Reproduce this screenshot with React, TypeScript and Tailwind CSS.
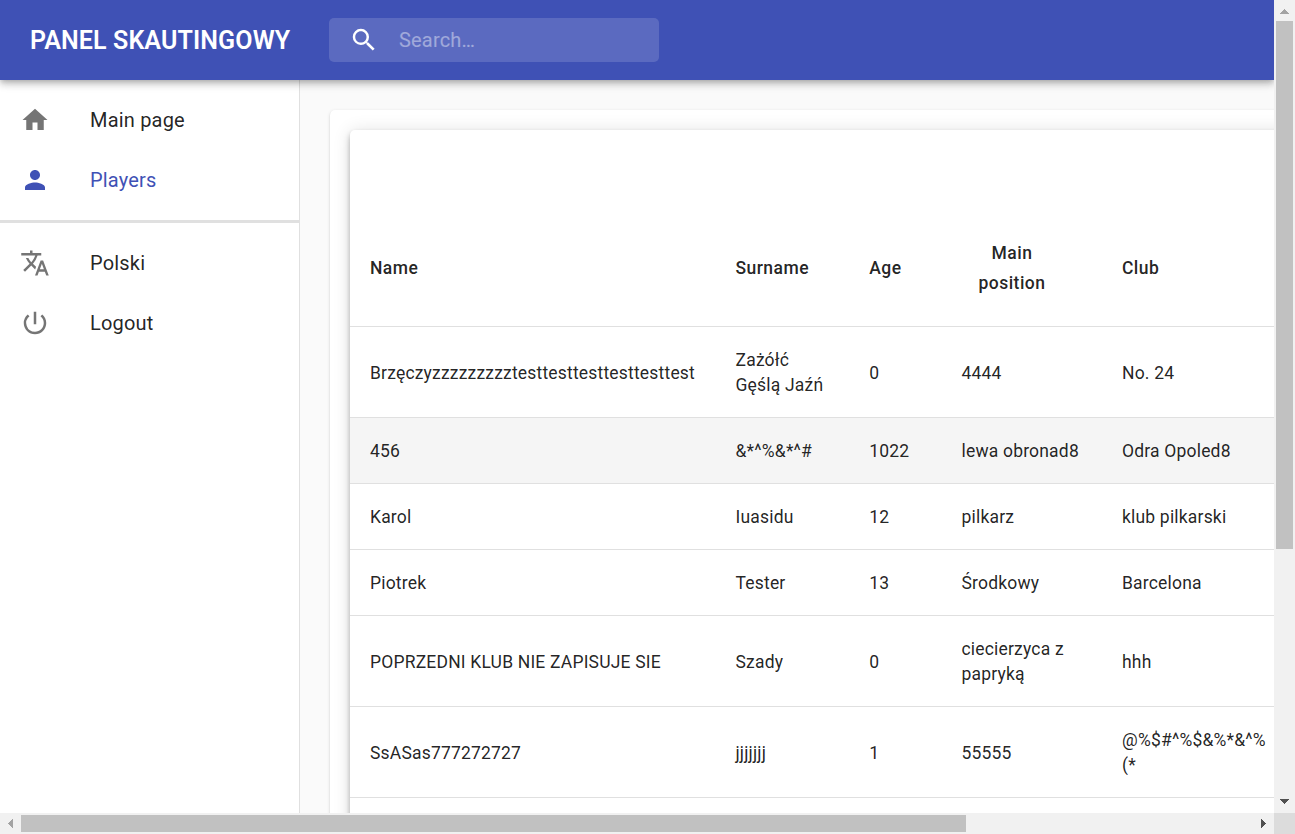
import type { ReactNode } from 'react';
import { MdHome, MdPerson, MdPowerSettingsNew, MdSearch, MdTranslate } from 'react-icons/md';

const players = [
  ['Brzęczyzzzzzzzzztesttesttesttesttesttest', 'Zażółć Gęślą Jaźń', '0', '4444', 'No. 24'],
  ['456', '&*^%&*^#', '1022', 'lewa obronad8', 'Odra Opoled8'],
  ['Karol', 'Iuasidu', '12', 'pilkarz', 'klub pilkarski'],
  ['Piotrek', 'Tester', '13', 'Środkowy', 'Barcelona'],
  ['POPRZEDNI KLUB NIE ZAPISUJE SIE', 'Szady', '0', 'ciecierzyca z papryką', 'hhh'],
  ['SsASas777272727', 'jjjjjjj', '1', '55555', '@%$#^%$&%*&^% (*'],
];

const rowHeights = ['h-[91px]', 'h-[66px]', 'h-[66px]', 'h-[66px]', 'h-[91px]', 'h-[91px]'];
const columns = 'grid grid-cols-[365.5px_133.8px_92.2px_160.5px_200px]';

function NavItem({ icon, label, active = false }: { icon: ReactNode; label: string; active?: boolean }) {
  return (
    <a className={`flex h-[60px] items-center pl-5 ${active ? 'text-[#3f51b5]' : 'text-black/[0.87]'}`}>
      <span className={`w-[70px] text-[30px] ${active ? 'text-[#3f51b5]' : 'text-[#757575]'}`}>{icon}</span>
      <span className="text-[20px] leading-[30px] tracking-[0.00938em]">{label}</span>
    </a>
  );
}

function Header() {
  return (
    <header className="relative z-10 flex h-20 shrink-0 items-center bg-[#3f51b5] pl-[30px] text-white shadow-[0_2.5px_5px_-1.25px_rgba(0,0,0,0.2),0_5px_6.25px_0_rgba(0,0,0,0.14),0_1.25px_12.5px_0_rgba(0,0,0,0.12)]">
      <h1 className="w-[299px] pt-0.5 whitespace-nowrap text-[25px] leading-10 font-semibold tracking-[0.12px]">PANEL SKAUTINGOWY</h1>
      <div className="flex h-11 w-[330px] items-center rounded-[5px] bg-white/15 pl-5">
        <MdSearch className="text-[30px]" />
        <input
          placeholder="Search…"
          className="ml-5 w-[240px] bg-transparent text-[20px] tracking-[0.00938em] outline-none placeholder:text-white/[0.42]"
        />
      </div>
    </header>
  );
}

function Sidebar() {
  return (
    <nav className="w-[300px] shrink-0 border-r border-[#e0e0e0] bg-white pt-2.5">
      <NavItem icon={<MdHome />} label="Main page" />
      <NavItem icon={<MdPerson />} label="Players" active />
      <hr className="my-2.5 h-[3px] border-0 bg-[#e0e0e0]" />
      <NavItem icon={<MdTranslate />} label="Polski" />
      <NavItem icon={<MdPowerSettingsNew />} label="Logout" />
    </nav>
  );
}

function PlayersTable() {
  return (
    <div className="h-[900px] w-[1300px] rounded-[5px] bg-white pt-20 text-[17.5px] text-black/[0.87] shadow-[0_2.5px_5px_-1.25px_rgba(0,0,0,0.2),0_5px_7px_0_rgba(0,0,0,0.16),0_1.25px_18px_0_rgba(0,0,0,0.12)]">
      <div className={`${columns} h-[117px] items-center border-b border-[#e0e0e0] leading-[30px] font-medium tracking-[0.45px]`}>
        <div className="pl-5">Name</div>
        <div className="pl-5">Surname</div>
        <div className="pl-5">Age</div>
        <div className="w-[141px] px-9 text-center">Main position</div>
        <div className="pl-5">Club</div>
      </div>
      {players.map((row, i) => (
        <div
          key={row[0]}
          className={`${columns} ${rowHeights[i]} items-center border-b border-[#e0e0e0] pt-0.5 leading-[25px] tracking-[0.01071em] ${i === 1 ? 'bg-[#f5f5f5]' : ''}`}
        >
          {row.map((value, j) => (
            <div key={j} className={j === 4 ? 'w-[175px] pl-5' : 'px-5'}>{value}</div>
          ))}
        </div>
      ))}
    </div>
  );
}

function VerticalScrollbar() {
  return (
    <div className="flex w-[21px] flex-col items-center bg-[#f1f1f1]">
      <svg className="h-[21px] w-[21px] shrink-0" viewBox="0 0 21 21" shapeRendering="crispEdges"><path d="M6 14h9l-4.500-5z" fill="#a3a3a3" /></svg>
      <div className="h-[528px] w-[17px] bg-[#c1c1c1]" />
      <svg className="mt-auto h-[21px] w-[21px] shrink-0" viewBox="0 0 21 21" shapeRendering="crispEdges"><path d="M6 7h9l-4.500 5z" fill="#505050" /></svg>
    </div>
  );
}

function HorizontalScrollbar() {
  return (
    <div className="flex items-center bg-[#f1f1f1]">
      <svg className="h-[21px] w-[21px] shrink-0" viewBox="0 0 21 21" shapeRendering="crispEdges"><path d="M13 6v9l-5-4.500z" fill="#a3a3a3" /></svg>
      <div className="h-[17px] w-[945px] bg-[#c1c1c1]" />
      <svg className="ml-auto h-[21px] w-[21px] shrink-0" viewBox="0 0 21 21" shapeRendering="crispEdges"><path d="M8 6v9l5-4.500z" fill="#505050" /></svg>
    </div>
  );
}

export default function App() {
  return (
    <div className="grid h-[834px] w-[1295px] grid-cols-[1274px_21px] grid-rows-[813px_21px] overflow-hidden font-['Roboto',sans-serif]">
      <div className="flex min-h-0 min-w-0 flex-col overflow-hidden bg-[#fafafa]">
        <Header />
        <div className="flex min-h-0 flex-1">
          <Sidebar />
          <main className="min-w-0 flex-1 overflow-hidden pt-[30px] pl-[30px]">
            <div className="h-[1000px] w-[1340px] rounded-[5px] bg-white p-5 shadow-[0_2.5px_1.25px_-1.25px_rgba(0,0,0,0.2),0_1.25px_1.25px_0_rgba(0,0,0,0.14),0_1.25px_3.75px_0_rgba(0,0,0,0.12)]">
              <PlayersTable />
            </div>
          </main>
        </div>
      </div>
      <VerticalScrollbar />
      <HorizontalScrollbar />
      <div className="bg-[#dcdcdc]" />
    </div>
  );
}
